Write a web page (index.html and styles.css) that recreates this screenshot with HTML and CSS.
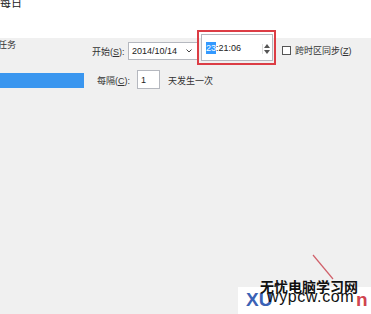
FILE: index.html
```html
<!DOCTYPE html>
<html lang="zh-CN">
<head>
    <meta charset="UTF-8">
    <title>每日 - 触发器</title>
    <link rel="stylesheet" href="styles.css">
</head>
<body>

<div class="header">
    <div class="header-title">每日</div>
</div>

<div class="panel">
    <div class="side">
        <div class="side-label">任务</div>
        <div class="side-bar"></div>
    </div>

    <div class="form">
        <div class="row row-start">
            <label class="label label-start">开始(<u>S</u>):</label>
            <div class="field date-field">
                <span>2014/10/14</span>
                <svg class="chevron" width="6" height="4" viewBox="0 0 6 4"><path d="M0.5 0.5 L3 3 L5.5 0.5" fill="none" stroke="#444" stroke-width="1"/></svg>
            </div>
            <div class="time-wrap">
                <div class="field time-field">
                    <span class="sel">23</span><span>:21:06</span>
                    <div class="spin">
                        <svg width="6" height="4" viewBox="0 0 6 4"><path d="M0 4 L3 0 L6 4 Z" fill="#555"/></svg>
                        <svg width="6" height="4" viewBox="0 0 6 4"><path d="M0 0 L3 4 L6 0 Z" fill="#555"/></svg>
                    </div>
                </div>
                <div class="mark"></div>
            </div>
            <span class="checkbox"></span>
            <label class="label label-sync">跨时区同步(<u>Z</u>)</label>
        </div>

        <div class="row row-every">
            <label class="label label-every">每隔(<u>C</u>):</label>
            <div class="field num-field">1</div>
            <span class="label label-days">天发生一次</span>
        </div>
    </div>
</div>

<div class="watermark">
    <svg class="arrow" width="24" height="28" viewBox="0 0 24 28"><line x1="1" y1="1" x2="21" y2="25" stroke="#d0606a" stroke-width="1.2"/></svg>
    <div class="wm-box"></div>
    <span class="wm-logo-a">XU</span>
    <span class="wm-logo-b">n</span>
    <div class="wm-title">无忧电脑学习网</div>
    <div class="wm-url">wypcw.com</div>
</div>

</body>
</html>
```

FILE: styles.css
```css
body {
    font-family: "Liberation Sans", "Noto Sans CJK SC", sans-serif;
    background-color: #f0f0f0;
    color: #333;
    margin: 0;
    width: 371px;
    height: 314px;
    overflow: hidden;
    position: relative;
}
.header {
    height: 42px;
    background: #fff;
}
.header-title {
    font-family: "Noto Sans CJK SC", sans-serif;
    font-size: 11px;
    line-height: 12px;
    color: #222;
    padding-top: 0;
    margin-top: -4px;
}
.panel {
    display: flex;
}
.side {
    width: 84px;
}
.side-label {
    font-family: "Noto Sans CJK SC", sans-serif;
    font-size: 9px;
    line-height: 12px;
    margin-top: 1px;
    margin-left: -2px;
}
.side-bar {
    height: 15px;
    margin-top: 22px;
    background: #3a96ef;
}
.form {
    margin-left: 8px;
}
.row {
    display: flex;
    align-items: flex-start;
}
.row-start {
    height: 32px;
}
.label {
    font-size: 9px;
    line-height: 12px;
    white-space: nowrap;
}
.label u {
    text-decoration: underline;
}
.label-start {
    width: 36px;
    margin-top: 8px;
}
.field {
    box-sizing: border-box;
    background: #fff;
    border: 1px solid #b5b8bf;
    font-size: 9px;
    color: #222;
    display: flex;
    align-items: center;
}
.date-field {
    width: 71px;
    height: 18px;
    margin-top: 4px;
    padding-left: 3px;
}
.chevron {
    margin-left: auto;
    margin-right: 6px;
}
.time-wrap {
    position: relative;
    margin-left: 2px;
    margin-top: -4px;
}
.time-field {
    width: 72px;
    height: 27px;
    padding-left: 4px;
    position: relative;
}
.sel {
    background: #3399ff;
    color: #fff;
    padding: 1px 0;
}
.spin {
    position: absolute;
    right: 2px;
    top: 9px;
    display: flex;
    flex-direction: column;
    gap: 2px;
    border-left: 1px solid #ddd;
    padding-left: 1px;
}
.spin svg {
    display: block;
}
.mark {
    position: absolute;
    left: -4px;
    top: -4px;
    right: -3px;
    bottom: -4px;
    border: 2px solid #dc3d45;
}
.checkbox {
    box-sizing: border-box;
    width: 9px;
    height: 9px;
    border: 1px solid #555;
    background: #fff;
    margin-left: 9px;
    margin-top: 8px;
}
.label-sync {
    margin-left: 4px;
    margin-top: 7px;
}
.label-every {
    width: 40px;
    margin-left: 5px;
    margin-top: 5px;
}
.num-field {
    width: 23px;
    height: 19px;
    padding-left: 3px;
}
.label-days {
    margin-left: 8px;
    margin-top: 5px;
}
.watermark {
    position: absolute;
    left: 0;
    top: 0;
    width: 371px;
    height: 314px;
    pointer-events: none;
}
.arrow {
    position: absolute;
    left: 312px;
    top: 254px;
}
.wm-box {
    position: absolute;
    left: 238px;
    top: 287px;
    right: 0;
    bottom: 0;
    background: #fff;
}
.wm-logo-a,
.wm-logo-b {
    position: absolute;
    top: 290px;
    font-size: 19px;
    font-weight: bold;
    line-height: 20px;
}
.wm-logo-a {
    left: 246px;
    color: #3b62b5;
}
.wm-logo-b {
    left: 356px;
    color: #d0454f;
}
.wm-title {
    position: absolute;
    left: 260px;
    top: 278px;
    font-family: "Noto Sans CJK SC", sans-serif;
    font-size: 14px;
    font-weight: bold;
    line-height: 16px;
    color: #111;
}
.wm-url {
    position: absolute;
    left: 267px;
    top: 288px;
    font-size: 16px;
    line-height: 18px;
    letter-spacing: 0.6px;
    color: #111;
}
```
